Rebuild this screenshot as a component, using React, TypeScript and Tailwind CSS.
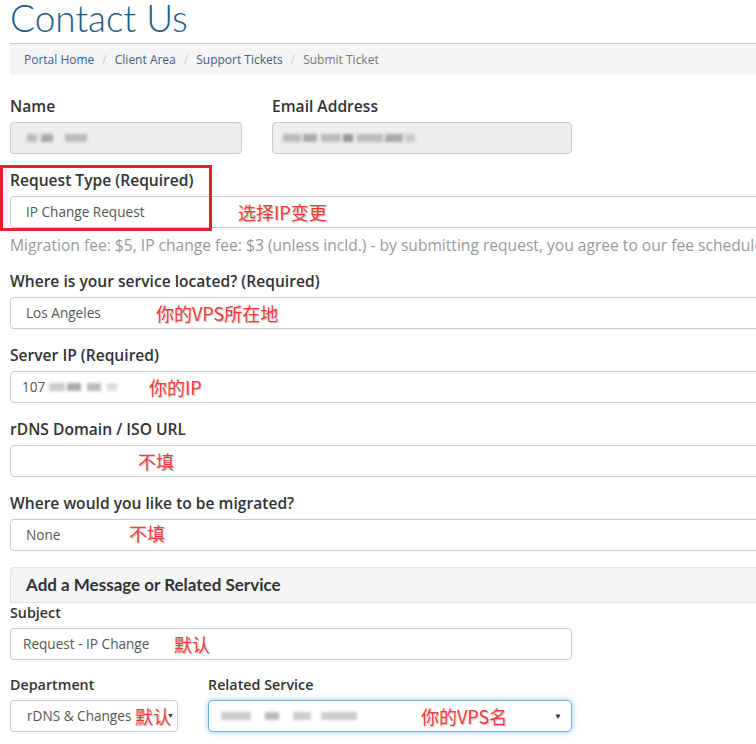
const sans = "font-['Open_Sans','Liberation_Sans',sans-serif]";
const note =
  "absolute top-1/2 -translate-y-1/2 whitespace-nowrap text-[18px] leading-none text-[#f23b3b] font-['Noto_Sans_CJK_SC',sans-serif] [text-shadow:1px_1px_1px_rgba(0,0,0,0.25)]";

function Label({ children, small }: { children: React.ReactNode; small?: boolean }) {
  return (
    <div
      className={`${small ? "text-[14.3px]" : "text-[15.6px]"} leading-[20px] font-semibold text-[#333]`}
    >
      {children}
    </div>
  );
}

function Blur({ w, ml = 0, shade = "bg-[#bbb]" }: { w: number; ml?: number; shade?: string }) {
  return (
    <span
      className={`inline-block h-[8px] ${shade} blur-[1.5px]`}
      style={{ width: w, marginLeft: ml }}
    />
  );
}

function Field({
  children,
  className = "",
}: {
  children?: React.ReactNode;
  className?: string;
}) {
  return (
    <div
      className={`relative mt-[6px] h-[32px] flex items-center border border-[#ccc] rounded-[4px] text-[13.6px] text-[#555] ${className}`}
    >
      {children}
    </div>
  );
}

export default function App() {
  return (
    <div className={`w-[756px] h-[744px] overflow-hidden bg-white ${sans}`}>
      <div className="relative w-[800px] pl-[10px]">
        {/* annotation box */}
        <div className="absolute left-0 top-[165px] w-[212px] h-[66px] border-[3px] border-[#e8202a] z-10" />

        <h1 className="h-[43px] text-[37px] leading-[35px] font-light text-[#1f5b8c] font-['Lato',sans-serif]">
          Contact Us
        </h1>

        <div className="h-[32px] flex items-center gap-[8px] pl-[14px] border-t border-[#ccc] bg-[#f5f5f5] text-[12px]">
          <span className="text-[#41607f]">Portal Home</span>
          <span className="text-[#ccc]">/</span>
          <span className="text-[#41607f]">Client Area</span>
          <span className="text-[#ccc]">/</span>
          <span className="text-[#41607f]">Support Tickets</span>
          <span className="text-[#ccc]">/</span>
          <span className="text-[#777]">Submit Ticket</span>
        </div>

        <div className="flex mt-[21px]">
          <div className="w-[232px]">
            <Label>Name</Label>
            <Field className="bg-[#eee] pl-[16px]">
              <Blur w={10} />
              <Blur w={12} ml={4} shade="bg-[#aaa]" />
              <Blur w={22} ml={12} />
            </Field>
          </div>
          <div className="w-[300px] ml-[30px]">
            <Label>Email Address</Label>
            <Field className="bg-[#eee] pl-[10px]">
              <Blur w={18} />
              <Blur w={14} ml={2} shade="bg-[#aaa]" />
              <Blur w={20} ml={4} />
              <Blur w={10} ml={2} shade="bg-[#999]" />
              <Blur w={26} ml={4} />
              <Blur w={18} ml={2} shade="bg-[#aaa]" />
              <Blur w={10} ml={2} shade="bg-[#ccc]" />
            </Field>
          </div>
        </div>

        <div className="mt-[16px]">
          <Label>Request Type (Required)</Label>
          <Field className="pl-[15px]">
            IP Change Request
            <span className={`${note} left-[227px]`}>选择IP变更</span>
          </Field>
          <div className="mt-[7px] text-[15.6px] leading-[20px] text-[#999] whitespace-nowrap">
            Migration fee: $5, IP change fee: $3 (unless incld.) - by submitting request, you agree to
            our fee schedule
          </div>
        </div>

        <div className="mt-[16px]">
          <Label>Where is your service located? (Required)</Label>
          <Field className="pl-[15px]">
            Los Angeles
            <span className={`${note} left-[145px]`}>你的VPS所在地</span>
          </Field>
        </div>

        <div className="mt-[16px]">
          <Label>Server IP (Required)</Label>
          <Field className="pl-[11px]">
            107
            <Blur w={16} ml={4} shade="bg-[#ccc]" />
            <Blur w={14} ml={2} shade="bg-[#aaa]" />
            <Blur w={14} ml={6} shade="bg-[#bbb]" />
            <Blur w={10} ml={6} shade="bg-[#ddd]" />
            <span className={`${note} left-[138px]`}>你的IP</span>
          </Field>
        </div>

        <div className="mt-[16px]">
          <Label>rDNS Domain / ISO URL</Label>
          <Field>
            <span className={`${note} left-[127px]`}>不填</span>
          </Field>
        </div>

        <div className="mt-[16px]">
          <Label>Where would you like to be migrated?</Label>
          <Field className="pl-[15px]">
            None
            <span className={`${note} left-[118px] -mt-[2px]`}>不填</span>
          </Field>
        </div>

        <div className="mt-[16px] h-[36px] flex items-center pl-[15px] border border-[#e3e3e3] rounded-t-[4px] bg-[#f5f5f5] text-[17px] font-bold text-[#333] font-['Lato',sans-serif]">
          Add a Message or Related Service
        </div>

        <div>
          <Label small>Subject</Label>
          <Field className="!mt-[5px] w-[562px] pl-[12px]">
            Request - IP Change
            <span className={`${note} left-[163px]`}>默认</span>
          </Field>
        </div>

        <div className="flex mt-[15px]">
          <div className="w-[168px]">
            <Label small>Department</Label>
            <Field className="!mt-[5px] pl-[16px]">
              rDNS &amp; Changes
              <span className={`${note} left-[124px]`}>默认</span>
              <span className="absolute right-[3px] text-[7px] text-[#333]">▼</span>
            </Field>
          </div>
          <div className="w-[364px] ml-[30px]">
            <Label small>Related Service</Label>
            <Field className="!mt-[5px] pl-[12px] !border-[#66afe9] shadow-[0_0_6px_rgba(102,175,233,0.6)]">
              <Blur w={30} shade="bg-[#ccc]" />
              <Blur w={14} ml={14} shade="bg-[#bbb]" />
              <Blur w={18} ml={14} shade="bg-[#ccc]" />
              <Blur w={36} ml={10} shade="bg-[#ccc]" />
              <span className={`${note} left-[212px]`}>你的VPS名</span>
              <span className="absolute right-[9px] text-[8px] text-[#333]">▼</span>
            </Field>
          </div>
        </div>
      </div>
    </div>
  );
}
